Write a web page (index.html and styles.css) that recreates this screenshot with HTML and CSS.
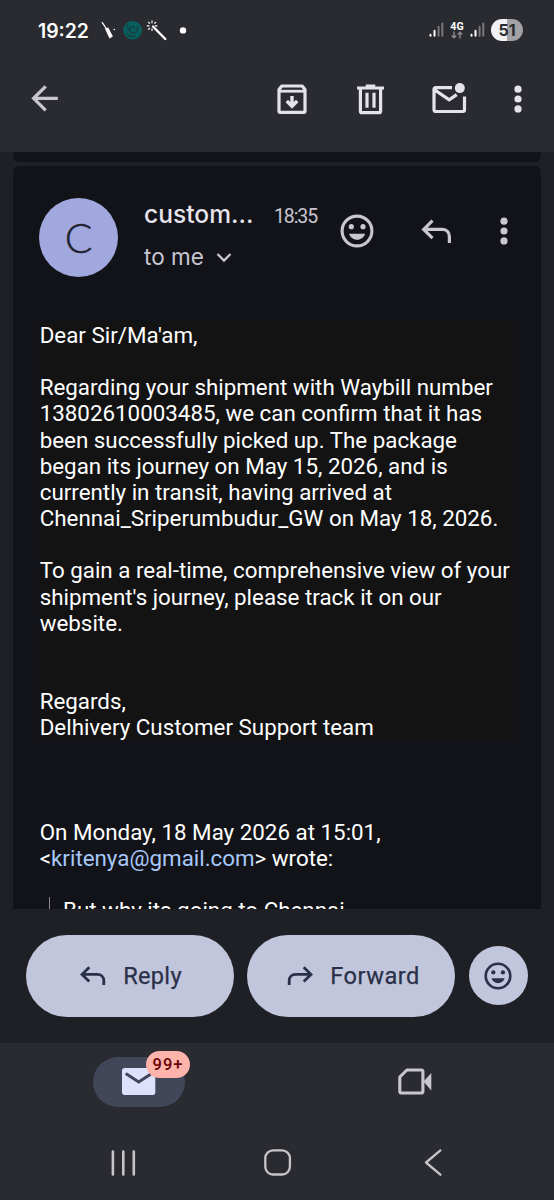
FILE: index.html
```html
<!DOCTYPE html>
<html lang="en">
<head>
<meta charset="utf-8">
<title>Mail</title>
<link rel="stylesheet" href="styles.css">
</head>
<body>
<div class="screen">
  <header class="top">
    <div class="status">
      <span class="clock">19:22</span>
      <svg class="notif" width="90" height="24" viewBox="100 18 90 24">
        <path d="M102.3 22.6L106.6 29" stroke="#fff" stroke-width="1.3" stroke-linecap="round"/>
        <path d="M104.8 28.6l3.5-1.2 4.6 9.2-3.4 2z" fill="#fff"/>
        <circle cx="114.3" cy="29.5" r=".8" fill="#fff"/>
        <circle cx="132.6" cy="30.2" r="9.3" fill="#05605f"/>
        <path d="M127.5 24c-1.5 3 .5 5.500 3 5M137.500 26c1 4-1.500 7.500-5 7s-4-3.500-2.500-5.500 4.500-1 4.500 1.500M126.500 33c2 3 6 4.500 9.500 3" fill="none" stroke="#164044" stroke-width="1.5"/>
        <path d="M153 26.500L165.300 39" stroke="#fff" stroke-width="2.4" stroke-linecap="round"/>
        <path d="M152 20.500v2.700M152 28.500v2.500M146.800 25.900h2.600M154.800 25.900h2.600M148.200 22l1.700 1.700M156 22l-1.700 1.700M148.200 29.700l1.700-1.700" stroke="#fff" stroke-width="1.2"/>
        <circle cx="183" cy="30.4" r="3.2" fill="#fff"/>
      </svg>
      <svg class="signal" width="15" height="16" viewBox="0 0 15 16"><g stroke-width="2" stroke-linecap="round"><path d="M1.5 12.7v1M5.5 8.7v5" stroke="#fff"/><path d="M9.6 4.7v9M13.3 1.5v12.2" stroke="#77777b"/></g></svg>
      <span class="net"><span class="net-label">4G</span>
        <svg width="12" height="8" viewBox="0 0 12 8"><path d="M3 .5v6M.8 4.5L3 6.8l2.2-2.3M9 7.5v-6M6.8 3.5L9 1.2l2.2 2.3" fill="none" stroke="#8b8b8f" stroke-width="1.4"/></svg>
      </span>
      <svg class="signal second" width="15" height="16" viewBox="0 0 15 16"><g stroke-width="2" stroke-linecap="round"><path d="M1.5 12.7v1M5.5 8.7v5" stroke="#fff"/><path d="M9.6 4.7v9M13.3 1.5v12.2" stroke="#77777b"/></g></svg>
      <span class="battery">51</span>
    </div>
    <nav class="actions">
      <svg width="28" height="28" viewBox="31 85 28 28"><path d="M57.8 98.3H33.5M45.7 86.3L33.6 98.3l12.1 12" fill="none" stroke="#c8c6d0" stroke-width="3.3"/></svg>
      <svg class="archive" width="30" height="30" viewBox="0 0 30 30"><path d="M4.8 2h20.4l2.8 3.4V27a1.3 1.3 0 0 1-1.3 1.3H3.3A1.3 1.3 0 0 1 2 27V5.4z" fill="none" stroke="#e4e2ea" stroke-width="3.2" stroke-linejoin="round"/><path d="M2 7.2h26" stroke="#e4e2ea" stroke-width="2.8"/><path d="M15 12v9M9.8 17l5.2 5.3 5.2-5.3" fill="none" stroke="#e4e2ea" stroke-width="3.4"/></svg>
      <svg class="trash" width="27" height="31" viewBox="0 0 27 31"><path d="M0 2.4h8.7V.5h9.6v1.9H27v3.2H0z" fill="#e4e2ea"/><path d="M3.4 4v23.2c0 .9.6 1.5 1.5 1.5h17.2c.9 0 1.5-.6 1.5-1.5V4M10 8.7v15M17 8.7v15" fill="none" stroke="#e4e2ea" stroke-width="3.2"/></svg>
      <svg class="unread" width="35" height="32" viewBox="0 0 35 32"><path d="M20 4.600H3.700A1.700 1.700 0 0 0 2 6.300v20.500a1.700 1.700 0 0 0 1.700 1.700h27.100a1.700 1.700 0 0 0 1.700-1.700V13.500M3 7.100l14.200 9.700 7.500-5.200" fill="none" stroke="#e4e2ea" stroke-width="3.2"/><circle cx="27.8" cy="5.100" r="5" fill="#e4e2ea"/></svg>
      <svg class="more" width="8" height="28" viewBox="0 0 8 28"><g fill="#e4e2ea"><circle cx="4" cy="4.2" r="3.6"/><circle cx="4" cy="14" r="3.6"/><circle cx="4" cy="23.9" r="3.6"/></g></svg>
    </nav>
  </header>

  <main class="thread">
    <div class="previous"></div>
    <article class="message">
      <div class="sender">
        <div class="avatar">C</div>
        <div class="who">
          <div class="line"><span class="name">custom...</span><span class="time">18:35</span></div>
          <div class="to"><span>to me</span><svg width="16" height="11" viewBox="0 0 16 11"><path d="M1.5 2L8 8.5 14.5 2" fill="none" stroke="#c8c6d0" stroke-width="2.3"/></svg></div>
        </div>
        <svg class="smile" width="34" height="34" viewBox="0 0 34 34"><circle cx="17" cy="17" r="14.9" fill="none" stroke="#c8c6d0" stroke-width="3.1"/><circle cx="11.3" cy="12.7" r="2.6" fill="#c8c6d0"/><circle cx="23" cy="12.7" r="2.6" fill="#c8c6d0"/><path d="M9 19.8h16.2c-1.2 3.6-4.3 6-8.1 6s-6.9-2.4-8.1-6z" fill="#c8c6d0"/></svg>
        <svg class="reply" width="31" height="25" viewBox="0 0 31 25"><path d="M11.5 1.7L2.7 10.4l8.8 8.7M2.7 10.4h18.7c4.5 0 7 3.5 7 7.5V24" fill="none" stroke="#c8c6d0" stroke-width="3.2"/></svg>
        <svg class="kebab" width="8" height="28" viewBox="0 0 8 28"><g fill="#c8c6d0"><circle cx="4" cy="4.2" r="3.6"/><circle cx="4" cy="14" r="3.6"/><circle cx="4" cy="23.9" r="3.6"/></g></svg>
      </div>
      <div class="body">
        <div class="letter">Dear Sir/Ma'am,<br><br>Regarding your shipment with Waybill number<br>13802610003485, we can confirm that it has<br>been successfully picked up. The package<br>began its journey on May 15, 2026, and is<br>currently in transit, having arrived at<br>Chennai_Sriperumbudur_GW on May 18, 2026.<br><br>To gain a real-time, comprehensive view of your<br>shipment's journey, please track it on our<br>website.<br><br><br>Regards,<br>Delhivery Customer Support team</div>
        <div class="intro">On Monday, 18 May 2026 at 15:01,<br>&lt;<span class="mail">kritenya@gmail.com</span>&gt; wrote:</div>
        <div class="quote">But why its going to Chennai</div>
      </div>
    </article>
  </main>

  <div class="respond">
    <button class="pill"><svg width="26" height="20" viewBox="0 0 26 20"><path d="M9.3 1.3L2 8.4l7.3 7.2M2 8.4h15.2c4.2 0 6.6 2.7 6.6 6.2V19" fill="none" stroke="#2b3049" stroke-width="2.8"/></svg><span class="reply-label">Reply</span></button>
    <button class="pill forward"><svg width="26" height="20" viewBox="0 0 26 20"><path d="M16.7 1.3L24 8.4l-7.3 7.2M24 8.4H8.8C4.6 8.4 2.2 11.1 2.2 14.6V19" fill="none" stroke="#2b3049" stroke-width="2.8"/></svg><span class="forward-label">Forward</span></button>
    <button class="react"><svg width="28" height="28" viewBox="0 0 34 34"><circle cx="17" cy="17" r="14.9" fill="none" stroke="#2b3049" stroke-width="3.2"/><circle cx="11.3" cy="12.7" r="2.6" fill="#2b3049"/><circle cx="23" cy="12.7" r="2.6" fill="#2b3049"/><path d="M9 19.8h16.2c-1.2 3.6-4.3 6-8.1 6s-6.9-2.4-8.1-6z" fill="#2b3049"/></svg></button>
  </div>

  <footer class="bottom">
    <div class="tabs">
      <div class="tab-mail"><svg width="34" height="27" viewBox="0 0 34 27"><rect width="33.3" height="27" rx="2.7" fill="#dde1fb"/><path d="M3.7 5.5L16.7 14l13-8.5" fill="none" stroke="#414659" stroke-width="3"/></svg><span class="badge">99+</span></div>
      <svg class="meet" width="34" height="27" viewBox="0 0 34 27"><path d="M8.9 2h14.5a1.5 1.5 0 0 1 1.5 1.5v20a1.5 1.5 0 0 1-1.5 1.5H3.3a1.5 1.5 0 0 1-1.5-1.5V9z" fill="none" stroke="#c8c6d0" stroke-width="3.1" stroke-linejoin="round"/><path d="M25.5 13.5L33.3 5v17.5z" fill="#c8c6d0"/></svg>
    </div>
    <div class="system">
      <svg width="25" height="26" viewBox="0 0 25 26"><path d="M1.9 1.6v22.8M12.3 1.6v22.8M22.8 1.6v22.8" stroke="#c5c5c9" stroke-width="2.6" stroke-linecap="round"/></svg>
      <svg class="home" width="28" height="27" viewBox="0 0 28 27"><rect x="1.3" y="1.3" width="24.6" height="24.2" rx="7.8" fill="none" stroke="#c5c5c9" stroke-width="2.3"/></svg>
      <svg class="back" width="18" height="27" viewBox="0 0 18 27"><path d="M16.4 1.4L2 13.5l14.4 12.2" fill="none" stroke="#c5c5c9" stroke-width="2.3" stroke-linecap="round" stroke-linejoin="round"/></svg>
    </div>
  </footer>
</div>
</body>
</html>
```
FILE: styles.css
```css
* { box-sizing: border-box; }
body { margin: 0; background: #1f2026; font-family: Roboto, "Liberation Sans", sans-serif; }
svg { display: block; flex: none; }
span { white-space: nowrap; }
.screen { width: 554px; height: 1200px; display: flex; flex-direction: column; overflow: hidden; }

.top { height: 152px; flex: none; background: #2a2b30; }
.status { height: 60px; display: flex; align-items: center; padding-left: 38px; }
.clock { width: 62px; padding-top: 1px; font: 600 19.4px/24px Inter, sans-serif; color: #fff; }
.signal { margin-left: 239px; }
.net { width: 14px; margin-left: 6px; display: flex; flex-direction: column; align-items: center; }
.net-label { font: 700 10.6px/9px Roboto, sans-serif; color: #fff; }
.signal.second { margin-left: 6px; }
.battery { width: 32px; height: 22px; margin-left: 6px; border-radius: 11px; background: linear-gradient(90deg, #f2f2f4 50%, #a2a2a5 50%); font: 700 16px/22px Inter, sans-serif; text-align: center; color: #2a2b30; }

.actions { height: 78px; display: flex; align-items: center; padding-left: 31px; }
.archive { margin-left: 218px; }
.trash { margin-left: 50px; }
.unread { margin-left: 48px; }
.more { margin-left: 47px; }

.thread { height: 757px; flex: none; overflow: hidden; padding: 0 13px; }
.previous { height: 10px; background: #121318; border-radius: 0 0 6px 6px; }
.message { height: 760px; margin-top: 4px; background: #121318; border-radius: 6px; padding: 0 26px; }
.sender { height: 156px; display: flex; align-items: flex-start; padding-top: 32px; }
.avatar { width: 79px; height: 79px; border-radius: 50%; background: #a1a8de; color: #20232f; font: 300 41px/79px Lato, sans-serif; -webkit-text-stroke: 0.4px #20232f; text-align: center; }
.who { width: 196px; margin-left: 26px; }
.line { display: flex; align-items: baseline; height: 39px; line-height: 32px; }
.name { width: 130px; font: 500 24.6px/32px Inter, sans-serif; color: #e6e4ec; }
.time { font-size: 19.5px; letter-spacing: -1.1px; color: #c8c6d0; }
.to { display: flex; align-items: center; gap: 12px; font: 400 22.5px/40px Inter, sans-serif; color: #c8c6d0; }
.smile { margin-top: 16px; }
.reply { margin-left: 46.5px; margin-top: 21px; }
.kebab { margin-left: 48.5px; margin-top: 19px; }

.body { font-size: 22.35px; line-height: 26.16px; color: #fff; white-space: nowrap; }
.letter { width: 474px; background: #131313; padding-left: 0.7px; }
.intro { padding: 78.5px 0 0 0.7px; }
.mail { color: #a8c7fa; }
.quote { margin: 26.16px 0 0 10px; padding-left: 13px; border-left: 1px solid #8b8b8f; }

.respond { height: 134px; flex: none; display: flex; align-items: center; padding-left: 26px; }
button { border: 0; padding: 0; background: #c1c6dd; color: #2b3049; display: flex; align-items: center; justify-content: center; }
.pill { width: 208px; height: 82px; border-radius: 41px; padding-left: 2px; gap: 17px; font: 400 23.6px/30px Roboto, sans-serif; -webkit-text-stroke: 0.25px #2b3049; }
.pill span { padding-bottom: 1px; letter-spacing: 0.3px; }
.forward { margin-left: 13px; padding-left: 5px; }
.forward .forward-label { letter-spacing: 0.5px; }
.react { width: 59px; height: 59px; border-radius: 50%; margin: -1px 0 0 14px; padding-right: 2px; }

.bottom { height: 157px; flex: none; background: #2a2b30; }
.tabs { display: flex; align-items: center; padding: 14px 0 0 93px; }
.tab-mail { position: relative; width: 92px; height: 50px; border-radius: 25px; background: #414659; display: flex; align-items: center; justify-content: center; }
.badge { position: absolute; left: 53px; top: -6px; width: 44px; height: 27px; border-radius: 13.5px; background: #ffb4ab; color: #690005; font: 500 16.5px/27px Roboto, sans-serif; letter-spacing: 1px; text-align: center; }
.tabs svg { margin-bottom: 1px; }
.meet { margin-left: 213px; }
.system { display: flex; align-items: center; padding: 42px 0 0 111px; }
.home { margin-left: 128px; }
.back { margin-left: 132px; }
```
